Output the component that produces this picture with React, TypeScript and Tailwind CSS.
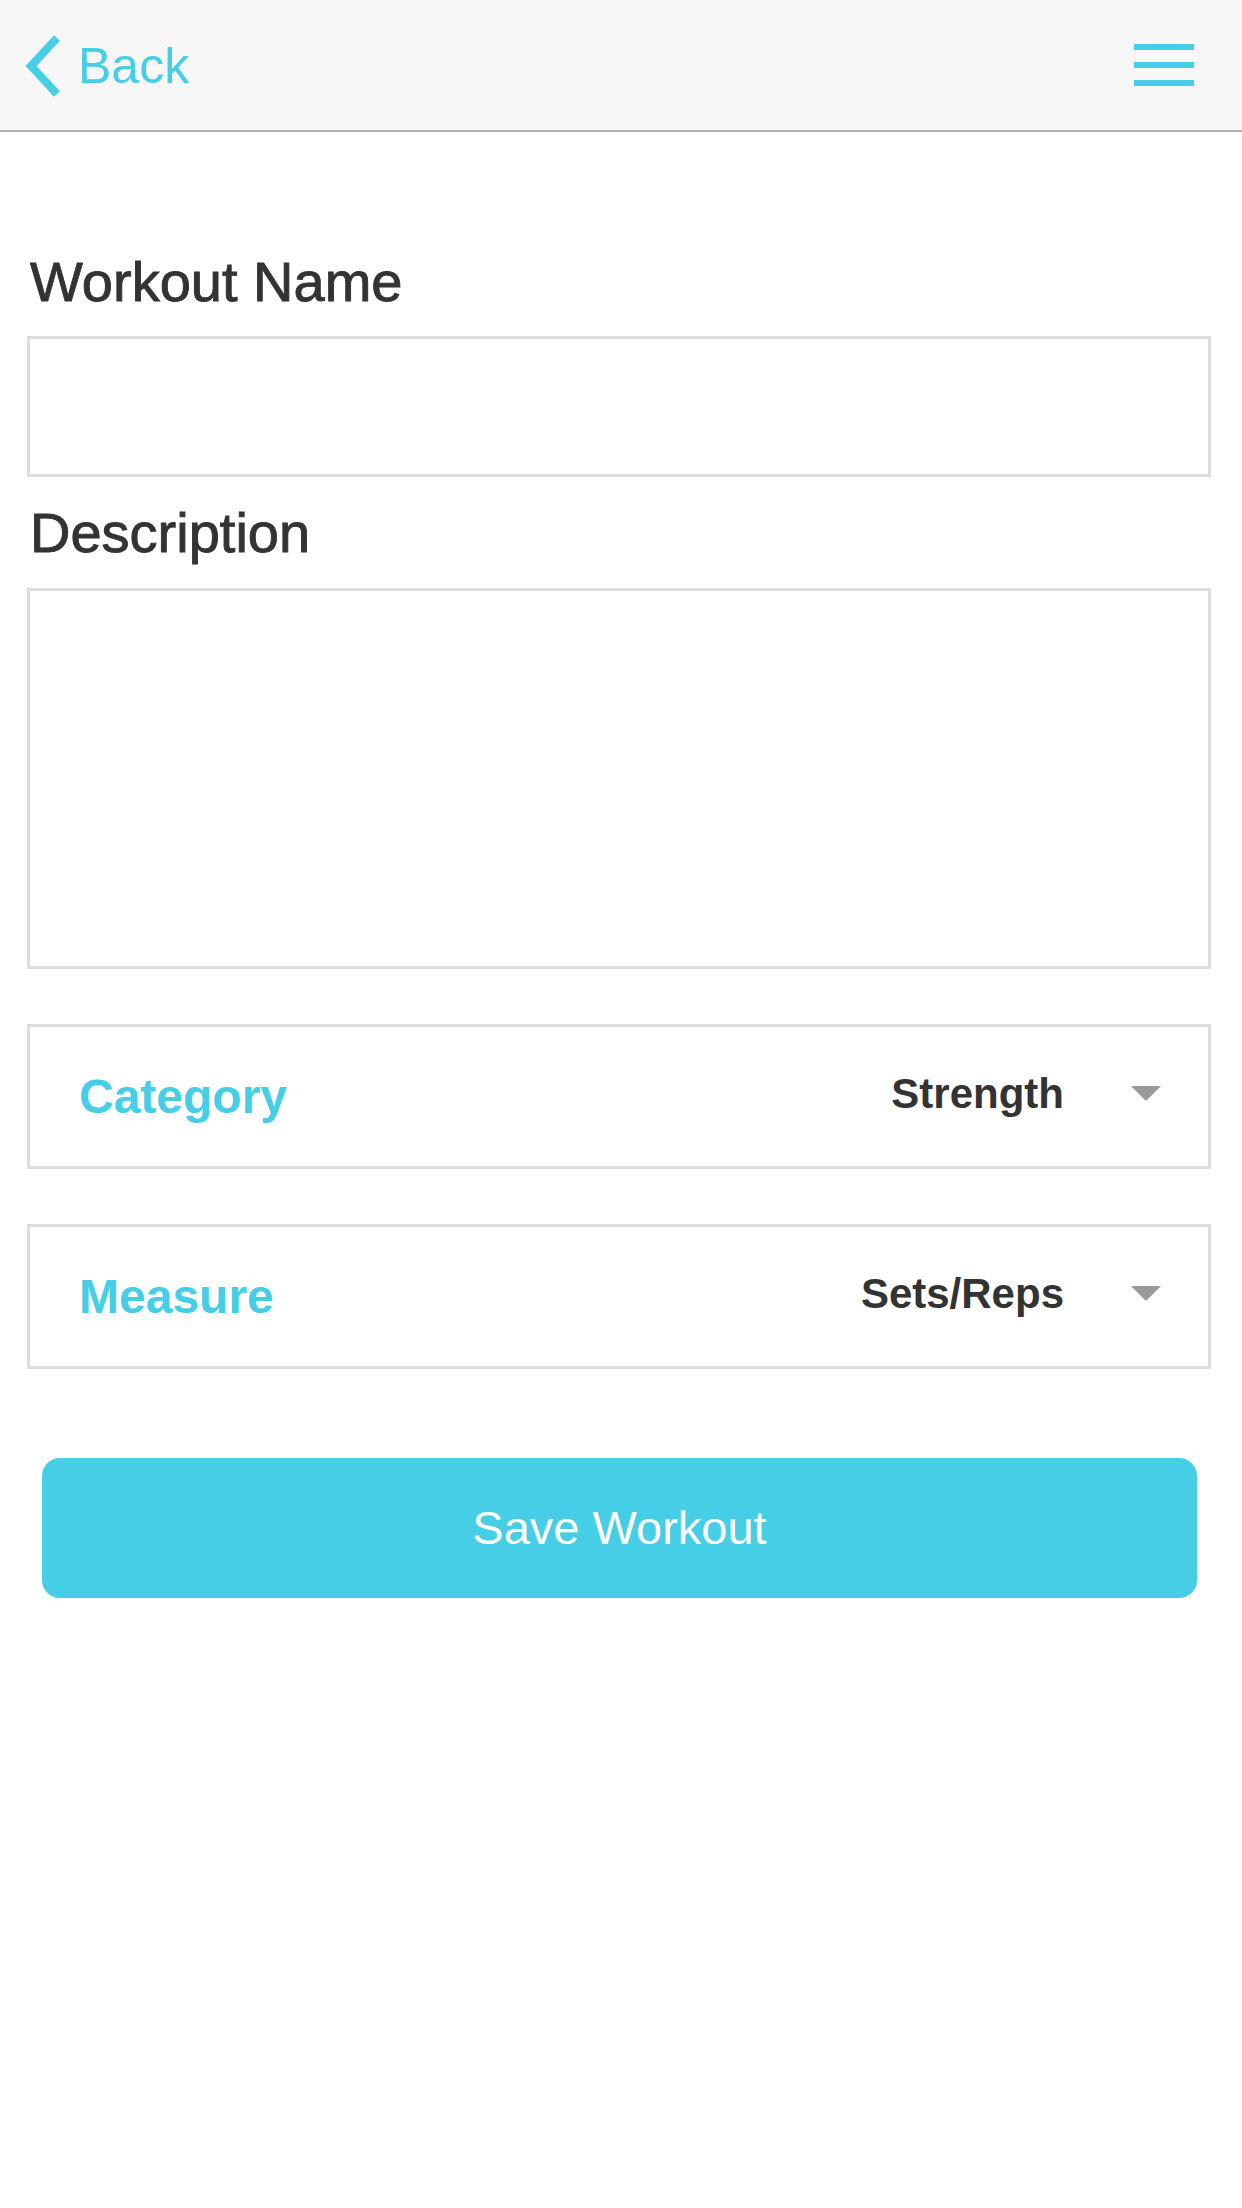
import React from 'react';

const BackChevron = () => (
  <svg width="38" height="62" viewBox="0 0 38 62" fill="none" stroke="currentColor" strokeWidth="8" strokeLinecap="butt" strokeLinejoin="miter">
    <polyline points="34,3 8,31 34,59" />
  </svg>
);

const Caret = () => (
  <svg width="30" height="15" viewBox="0 0 30 15" className="text-[#999999]">
    <polygon points="0,0 30,0 15,15" fill="currentColor" />
  </svg>
);

const SelectRow = ({ label, value }: { label: string; value: string }) => (
  <div className="flex h-[145px] items-center justify-between border-[3px] border-[#dddddd] pl-[49px] pr-[47px]">
    <span className="text-[48px] leading-none font-bold text-[#45cee5]">{label}</span>
    <div className="flex items-center gap-[67px] pb-[6px]">
      <span className="text-[42px] leading-none font-bold text-[#333333]">{value}</span>
      <Caret />
    </div>
  </div>
);

export default function App() {
  return (
    <div className="min-h-[2208px] w-[1242px] bg-white font-['Liberation_Sans',Arial,sans-serif]">
      <header className="flex h-[132px] items-center justify-between border-b-2 border-[#b0b0b0] bg-[#f7f7f7] pl-[23px] pr-[48px]">
        <button className="flex items-center gap-[17px] pt-[2px] text-[#45cee5]">
          <BackChevron />
          <span className="text-[50px] leading-none font-light">Back</span>
        </button>
        <button className="flex w-[60px] flex-col gap-[12px]" aria-label="Menu">
          <span className="block h-[6px] w-[60px] bg-[#45cee5]" />
          <span className="block h-[6px] w-[60px] bg-[#45cee5]" />
          <span className="block h-[6px] w-[60px] bg-[#45cee5]" />
        </button>
      </header>

      <main className="flex flex-col pl-[27px] pr-[31px] pt-[122px]">
        <label className="pl-[3px] text-[56px] leading-[55px] text-[#333333] [-webkit-text-stroke:0.9px_#333333]">Workout Name</label>
        <input className="mt-[27px] h-[141px] border-[3px] border-[#dddddd] bg-white px-4 text-[44px] outline-none" />

        <label className="mt-[28px] pl-[3px] text-[56px] leading-[55px] text-[#333333] [-webkit-text-stroke:0.9px_#333333]">Description</label>
        <textarea className="mt-[28px] h-[381px] resize-none border-[3px] border-[#dddddd] bg-white p-4 text-[44px] outline-none" />

        <div className="mt-[55px]">
          <SelectRow label="Category" value="Strength" />
        </div>
        <div className="mt-[55px]">
          <SelectRow label="Measure" value="Sets/Reps" />
        </div>

        <button className="mt-[89px] ml-[15px] mr-[14px] h-[140px] rounded-[18px] bg-[#45cee5] text-[47px] font-light text-white">
          Save Workout
        </button>
      </main>
    </div>
  );
}
